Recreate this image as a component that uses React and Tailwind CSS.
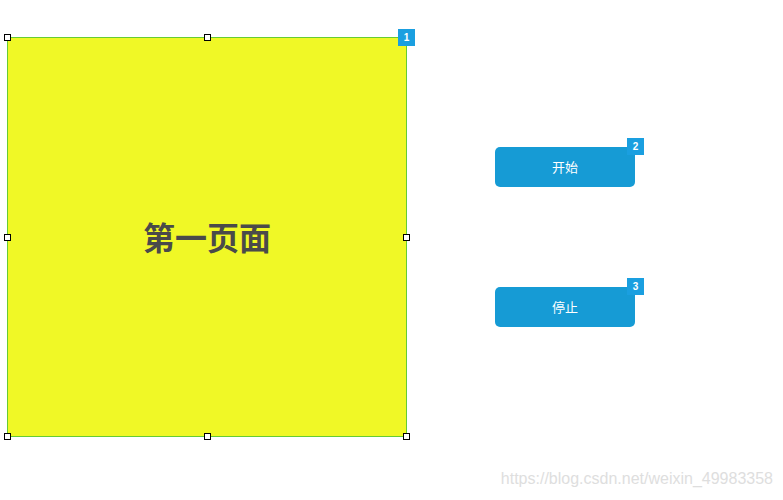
import React from "react";

function Handle({ className }) {
  return (
    <div
      className={
        "absolute w-[7px] h-[7px] bg-white border border-black " + className
      }
    />
  );
}

function Badge({ n }) {
  return (
    <div className="absolute z-10 -top-[9px] -right-[9px] w-[17px] h-[17px] bg-[#1a9fe0] text-white text-[10px] font-bold leading-[17px] text-center font-['Liberation_Sans',Arial,sans-serif]">
      {n}
    </div>
  );
}

function Button({ label, n }) {
  return (
    <div className="relative w-[140px] h-[40px] rounded-[5px] bg-[#169bd5] flex items-center justify-center text-white text-[13px]">
      {label}
      <Badge n={n} />
    </div>
  );
}

export default function App() {
  return (
    <div className="relative w-[783px] h-[500px] bg-white overflow-hidden font-['Noto_Sans_CJK_SC',sans-serif]">
      <div className="flex items-start pl-[7px] pt-[37px]">
        <div className="relative w-[400px] h-[400px] bg-[#f0f826] border border-[#66cc33] flex items-center justify-center">
          <span className="text-[32px] font-bold text-[#4a4a4a] leading-none -mt-[2px]">
            第一页面
          </span>
          <Handle className="-top-[4px] -left-[4px]" />
          <Handle className="-top-[4px] left-[196px]" />
          <Handle className="-top-[4px] -right-[4px]" />
          <Handle className="top-[196px] -left-[4px]" />
          <Handle className="top-[196px] -right-[4px]" />
          <Handle className="-bottom-[4px] -left-[4px]" />
          <Handle className="-bottom-[4px] left-[196px]" />
          <Handle className="-bottom-[4px] -right-[4px]" />
          <Badge n={1} />
        </div>
        <div className="ml-[88px] pt-[110px] flex flex-col gap-[100px]">
          <Button label="开始" n={2} />
          <Button label="停止" n={3} />
        </div>
      </div>
      <div className="absolute right-[10px] bottom-[9px] text-[16px] text-[#dedede] font-['Liberation_Sans',Arial,sans-serif]">
        https://blog.csdn.net/weixin_49983358
      </div>
    </div>
  );
}
